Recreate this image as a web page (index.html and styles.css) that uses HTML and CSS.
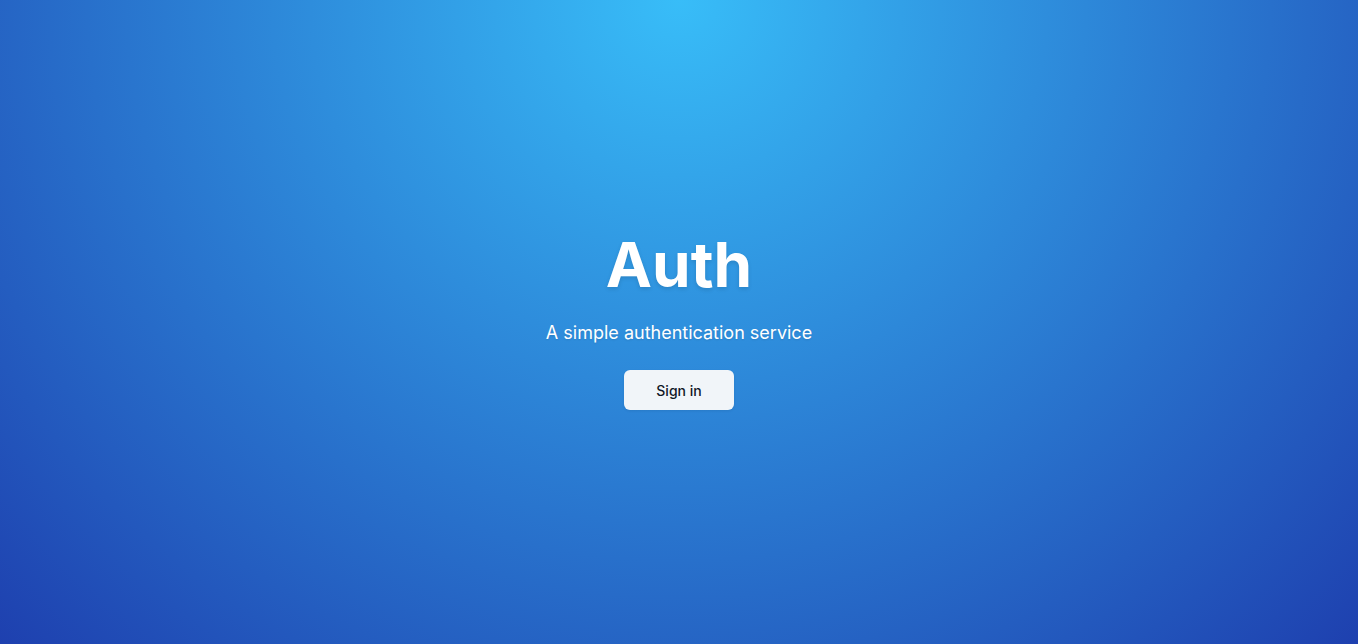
FILE: index.html
```html
<!DOCTYPE html>
<html lang="en">
<head>
<meta charset="utf-8">
<title>Auth</title>
<link rel="stylesheet" href="styles.css">
</head>
<body>
<main class="hero">
  <h1 class="title">Auth</h1>
  <p class="subtitle">A simple authentication service</p>
  <button class="btn" type="button">Sign in</button>
</main>
</body>
</html>
```
FILE: styles.css
```css
html, body {
  margin: 0;
  padding: 0;
  height: 100%;
}
body {
  font-family: Inter, "Noto Sans", sans-serif;
  background: radial-gradient(ellipse at top, #38bdf8, #1e40af);
  color: #fff;
}
.hero {
  min-height: 100vh;
  display: flex;
  flex-direction: column;
  align-items: center;
  justify-content: center;
  text-align: center;
}
.title {
  margin: 0;
  font-family: Inter, sans-serif;
  font-weight: 700;
  font-size: 62px;
  line-height: 1;
  letter-spacing: 0;
  text-shadow: 0 2px 4px rgba(0, 0, 0, 0.12);
}
.subtitle {
  margin: 23px 0 0;
  font-size: 18px;
  line-height: 28px;
  text-shadow: 0 1px 2px rgba(0, 0, 0, 0.1);
}
.btn {
  margin-top: 23px;
  width: 110px;
  height: 40px;
  border: 0;
  border-radius: 6px;
  background: #f1f5f9;
  color: #111827;
  font-family: Inter, sans-serif;
  font-size: 14px;
  font-weight: 500;
  box-shadow: 0 1px 3px rgba(0, 0, 0, 0.08);
  cursor: pointer;
}
```
